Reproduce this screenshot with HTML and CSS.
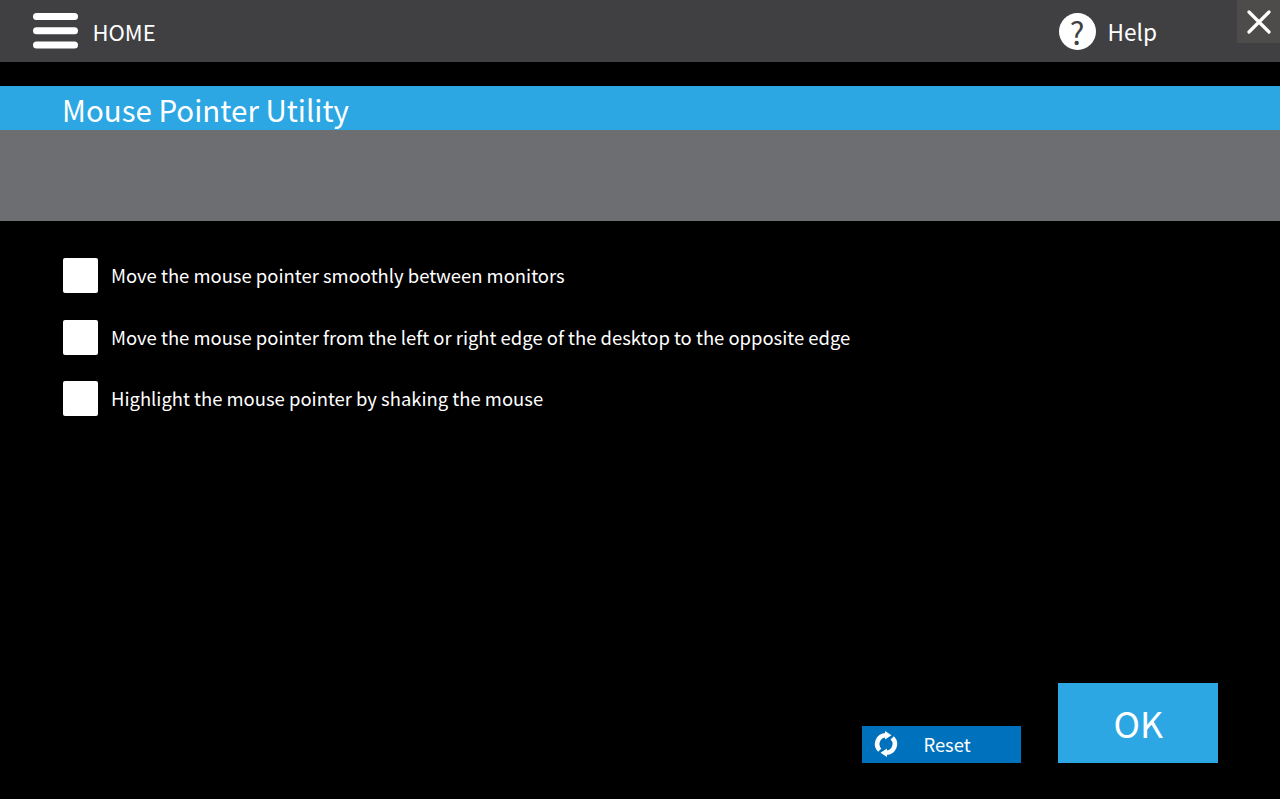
FILE: index.html
```html
<!DOCTYPE html>
<html lang="en">
<head>
<meta charset="utf-8">
<title>Mouse Pointer Utility</title>
<link rel="stylesheet" href="styles.css">
</head>
<body>
<div class="page">
  <header class="topbar">
    <div class="home">
      <svg class="burger" width="45" height="36" viewBox="0 0 45 36"><g fill="#fff"><rect x="0" y="0" width="45" height="7" rx="3.5"/><rect x="0" y="14.2" width="45" height="7" rx="3.5"/><rect x="0" y="28.4" width="45" height="7" rx="3.5"/></g></svg>
      <span class="home-label">HOME</span>
    </div>
    <div class="help">
      <span class="help-icon">?</span>
      <span class="help-label">Help</span>
    </div>
    <button class="close" aria-label="Close">
      <svg width="24" height="24" viewBox="0 0 24 24"><path d="M2 2 L22 22 M22 2 L2 22" stroke="#fff" stroke-width="3.2" stroke-linecap="round" fill="none"/></svg>
    </button>
  </header>
  <h1 class="title">Mouse Pointer Utility</h1>
  <div class="band"></div>
  <main class="options">
    <label class="option"><span class="box"></span><span>Move the mouse pointer smoothly between monitors</span></label>
    <label class="option"><span class="box"></span><span>Move the mouse pointer from the left or right edge of the desktop to the opposite edge</span></label>
    <label class="option"><span class="box"></span><span>Highlight the mouse pointer by shaking the mouse</span></label>
  </main>
  <footer class="actions">
    <button class="reset">
      <svg class="reset-icon" width="26" height="26" viewBox="0 0 26 26"><g fill="none" stroke="#fff" stroke-width="4.6"><path d="M6.8 19.2 A8.7 8.7 0 0 1 13 4.3"/><path d="M19.2 6.8 A8.7 8.7 0 0 1 13 21.7"/></g><path d="M12 0 L18.5 4.3 L12 8.6 Z M14 17.4 L7.5 21.7 L14 26 Z" fill="#fff"/></svg>
      <span>Reset</span>
    </button>
    <button class="ok">OK</button>
  </footer>
</div>
</body>
</html>
```

FILE: styles.css
```css
* { box-sizing: border-box; }
html, body { margin: 0; padding: 0; height: 100%; background: #000; }
body { font-family: "Noto Sans CJK JP", "Noto Sans", sans-serif; color: #fff; }
button { font-family: inherit; color: #fff; border: 0; padding: 0; }
.page { height: 799px; display: flex; flex-direction: column; overflow: hidden; }

.topbar { position: relative; height: 62px; background: #404042; display: flex; align-items: center; justify-content: space-between; padding: 0 123px 0 33px; flex: none; }
.home { display: flex; align-items: center; gap: 14.5px; }
.burger { display: block; }
.home-label { font-size: 22px; line-height: 34px; }
.help { display: flex; align-items: center; gap: 12px; }
.help-icon { width: 37px; height: 37px; border-radius: 50%; background: #fff; color: #404042; font-size: 31px; font-weight: 400; line-height: 37px; text-align: center; }
.help-label { font-size: 22.6px; line-height: 36px; padding-top: 1px; }
.close { position: absolute; top: 0; right: 0; width: 43px; height: 43px; background: #4e4c4b; display: flex; align-items: center; justify-content: center; }
.close svg { display: block; }

.title { margin: 24px 0 0; height: 44px; padding-left: 62px; background: #2ca7e3; font-size: 29.5px; font-weight: 400; line-height: 47px; flex: none; }
.band { height: 91px; background: #6d6e71; flex: none; }

.options { padding: 37.4px 0 0 63px; display: flex; flex-direction: column; gap: 26.4px; flex: 1; }
.option { display: flex; align-items: center; gap: 13px; font-size: 18.45px; line-height: 35px; height: 35px; }
.box { width: 35px; height: 35px; background: #fff; border-radius: 2px; flex: none; }

.actions { display: flex; justify-content: flex-end; align-items: flex-end; gap: 37px; padding: 0 61.7px 36px 0; flex: none; }
.reset { width: 159.6px; height: 37px; background: #0071bc; display: flex; align-items: center; font-size: 18.4px; padding: 0 0 1px 11.7px; gap: 24px; }
.reset-icon { display: block; }
.ok { width: 160px; height: 80px; background: #2ca7e3; font-size: 35.7px; line-height: 80px; }
```
